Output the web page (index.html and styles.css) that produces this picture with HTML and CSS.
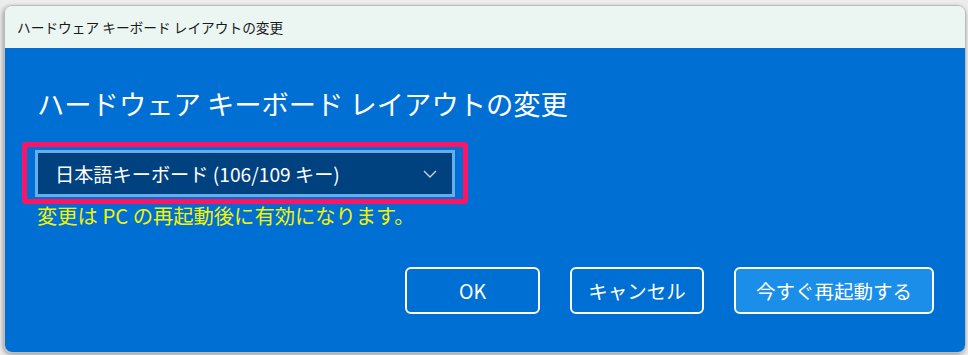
FILE: index.html
```html
<!DOCTYPE html>
<html lang="ja">
<head>
<meta charset="utf-8">
<title>ハードウェア キーボード レイアウトの変更</title>
<link rel="stylesheet" href="styles.css">
</head>
<body>
<div class="window">
  <div class="titlebar">ハードウェア キーボード レイアウトの変更</div>
  <div class="content">
    <h1 class="heading">ハードウェア キーボード レイアウトの変更</h1>
    <div class="highlight">
      <div class="select">
        <span class="select-text">日本語キーボード (106/109 キー)</span>
        <svg class="chevron" width="14" height="8" viewBox="0 0 14 8"><path d="M1 1 L7 7 L13 1" fill="none" stroke="#c9d6e4" stroke-width="1.4"/></svg>
      </div>
    </div>
    <p class="note">変更は PC の再起動後に有効になります。</p>
    <div class="buttons">
      <button class="btn btn-ok">OK</button>
      <button class="btn btn-cancel">キャンセル</button>
      <button class="btn btn-primary">今すぐ再起動する</button>
    </div>
  </div>
</div>
</body>
</html>
```
FILE: styles.css
```css
* { box-sizing: border-box; }
html, body {
  margin: 0;
  padding: 0;
  background: #ececec;
  width: 968px;
  height: 355px;
  overflow: hidden;
  font-family: "Noto Sans CJK JP", "Noto Sans", sans-serif;
}
body {
  padding: 5px 0 0 4px;
}
.window {
  width: 962px;
  height: 348px;
  border: 1px solid #bcbcbc;
  border-radius: 8px;
  overflow: hidden;
  box-shadow: -2px 1px 4px rgba(0,0,0,0.18), 0 2px 4px rgba(0,0,0,0.2);
  display: flex;
  flex-direction: column;
}
.titlebar {
  height: 42px;
  background: #ebf5f1;
  color: #1a1a1a;
  font-size: 13.7px;
  line-height: 42px;
  padding-left: 12px;
  flex: none;
}
.content {
  flex: 1;
  background: #006fd3;
  padding: 35px 0 0 17px;
  display: flex;
  flex-direction: column;
}
.heading {
  margin: 0 0 19px 15px;
  font-weight: 400;
  font-size: 27.3px;
  line-height: 40px;
  color: #ffffff;
}
.highlight {
  width: 446px;
  height: 62px;
  border: 5px solid #ff1464;
  border-radius: 4px;
  padding: 3px 8px 2px 8px;
}
.select {
  width: 420px;
  height: 47px;
  border: 3px solid #66aee9;
  background: #00417f;
  display: flex;
  align-items: center;
  justify-content: space-between;
  padding: 0 15px 0 17px;
}
.select-text {
  color: #ffffff;
  font-size: 19.2px;
  line-height: 24px;
}
.chevron { display: block; }
.note {
  margin: 0 0 0 15px;
  color: #f4f400;
  font-size: 20.3px;
  line-height: 22px;
}
.buttons {
  display: flex;
  justify-content: flex-end;
  gap: 30px;
  margin-top: 41px;
  padding-right: 31px;
}
.btn {
  height: 47px;
  border: 2px solid #ffffff;
  border-radius: 6px;
  background: transparent;
  color: #ffffff;
  font-family: "Noto Sans CJK JP", "Noto Sans", sans-serif;
  font-size: 19.5px;
  padding: 0;
}
.btn-ok { width: 135px; }
.btn-cancel { width: 134px; }
.btn-primary { width: 200px; background: #1a8ee9; }
```
